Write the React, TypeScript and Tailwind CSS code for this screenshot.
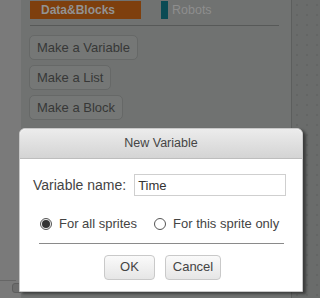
export default function App() {
  const font = { fontFamily: '"Liberation Sans", Arial, sans-serif' };
  const sideButtons = ["Make a Variable", "Make a List", "Make a Block"];

  return (
    <div className="relative w-[320px] h-[298px] overflow-hidden flex bg-[#7a7a7a]" style={font}>
      {/* left strip */}
      <div className="w-[21px] h-full flex flex-col justify-end pb-[5px]">
        <div className="h-[1px] w-[16px] bg-[#666] mb-[2px]" />
        <div className="ml-[12px] w-[9px] h-[10px] rounded-l-[3px] bg-[#6d6d6d] border border-[#5e5e5e]" />
      </div>

      {/* palette panel */}
      <div className="w-[271px] h-full bg-[#707271] border-r border-[#5c5e5d] pl-[7px]">
        <div className="flex items-start pt-[1px] h-[19px]">
          <div className="ml-[2px] w-[111px] h-[18px] bg-[#7e3f0d] text-[12px] font-bold text-[#929292] pl-[11px] leading-[18px]">
            Data&amp;Blocks
          </div>
          <div className="ml-[20px] w-[7px] h-[18px] bg-[#0b4b54]" />
          <div className="ml-[4px] text-[12.5px] text-[#8e8e8e] leading-[18px]">Robots</div>
        </div>
        <div className="ml-[2px] mt-[6px] w-[249px] h-[1px] bg-[#575958]" />
        <div className="flex flex-col items-start gap-[5px] mt-[9px] ml-[1px]">
          {sideButtons.map((b) => (
            <div
              key={b}
              className="h-[25px] px-[7px] rounded-[5px] border border-[#666867] bg-[#757776] text-[13px] text-[#373737] leading-[23px]"
            >
              {b}
            </div>
          ))}
        </div>
      </div>

      {/* stage */}
      <div className="flex-1 h-full bg-[#6a6c6b] bg-[radial-gradient(#636564_1px,transparent_1px)] bg-[length:10px_10px]" />

      {/* dialog */}
      <div className="absolute left-[19px] top-[128px] w-[284px] h-[164px] bg-white rounded-t-[6px] border border-[#c8c8c8] shadow-[3px_2px_3px_rgba(0,0,0,0.45)] flex flex-col">
        <div className="h-[30px] rounded-t-[6px] bg-gradient-to-b from-[#ececec] to-[#d4d4d4] border-b border-[#bdbdbd] flex items-center justify-center text-[12.5px] text-[#454545]">
          New Variable
        </div>
        <div className="flex items-center pl-[13px] mt-[15px]">
          <span className="text-[14px] text-[#444]">Variable name:</span>
          <div className="ml-[8px] w-[152px] h-[22px] border border-[#cfcfcf] text-[13px] text-[#333] pl-[3px] leading-[21px]">
            Time
          </div>
        </div>
        <div className="flex items-center mt-[18px] pl-[20px] text-[13px] text-[#444]">
          <span className="w-[12px] h-[12px] rounded-full border border-[#555] bg-[#eee] flex items-center justify-center">
            <span className="w-[8px] h-[8px] rounded-full bg-[#333]" />
          </span>
          <span className="ml-[7px]">For all sprites</span>
          <span className="ml-[17px] w-[12px] h-[12px] rounded-full border border-[#555] bg-white" />
          <span className="ml-[7px]">For this sprite only</span>
        </div>
        <div className="ml-[19px] mt-[9px] w-[245px] h-[1px] bg-[#8a8a8a]" />
        <div className="flex justify-center gap-[10px] mt-[11px] pl-[3px]">
          <div className="w-[51px] h-[25px] rounded-[4px] border border-[#c9c9c9] bg-gradient-to-b from-[#fafafa] to-[#e6e6e6] text-[13px] text-[#444] flex items-center justify-center">
            OK
          </div>
          <div className="w-[56px] h-[25px] rounded-[4px] border border-[#c9c9c9] bg-gradient-to-b from-[#fafafa] to-[#e6e6e6] text-[13px] text-[#444] flex items-center justify-center">
            Cancel
          </div>
        </div>
      </div>
    </div>
  );
}
